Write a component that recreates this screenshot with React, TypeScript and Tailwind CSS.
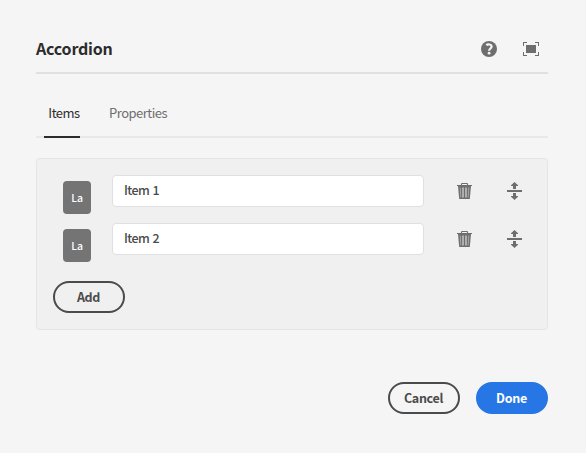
import React from 'react';

function HelpIcon() {
  return (
    <svg width="18" height="18" viewBox="0 0 18 18">
      <circle cx="9" cy="9" r="8" fill="#6e6e6e" />
      <path d="M6.3 5.1C7.6 4 11.6 4 11.6 6.6C11.6 8.5 9.1 8.5 9.1 10.8" fill="none" stroke="#f5f5f5" strokeWidth="2.2" />
      <circle cx="9.1" cy="13.2" r="1.4" fill="#f5f5f5" />
    </svg>
  );
}

function FullScreenIcon() {
  return (
    <svg width="18" height="18" viewBox="0 0 18 18" fill="#6e6e6e">
      <rect x="4" y="5" width="10" height="8" />
      <path d="M1 2h4v1H2v3H1zM13 2h4v4h-1V3h-3zM1 12h1v3h3v1H1zM16 12h1v4h-4v-1h3z" />
    </svg>
  );
}

function TrashIcon() {
  return (
    <svg width="18" height="18" viewBox="0 0 18 18">
      <path d="M5.5 3V1.5h6V3" fill="none" stroke="#6e6e6e" strokeWidth="1" strokeLinejoin="round" />
      <path d="M1 3h15v1h-1l-1.2 13H3.2L2 4H1z" fill="#6e6e6e" />
      <path d="M4.2 5.5l.6 10M12.8 5.5l-.6 10" stroke="#a6a6a6" strokeWidth="1" />
      <path d="M7 5.5v10M10 5.5v10" stroke="#f0f0f0" strokeWidth="1" />
    </svg>
  );
}

function MoveIcon() {
  return (
    <svg width="18" height="20" viewBox="0 0 18 20" fill="#6e6e6e">
      <path d="M1 9h15v2H1zM7 8V5H5v-.8L8.5 1 12 4.2V5h-2v3zM7 12v3H5v.8L8.5 19l3.5-3.2V15h-2v-3z" />
    </svg>
  );
}

function ItemRow({ label }: { label: string }) {
  return (
    <div className="flex h-12 items-start">
      <div className="mt-1.5 flex h-[33px] w-7 items-center justify-center rounded-[4px] bg-[#747474] text-[10.5px] leading-[16px] font-medium tracking-[-0.2px] text-white">
        <span>La</span>
      </div>
      <input
        className="ml-[21px] h-8 w-[312px] rounded-[4px] border border-[#e0e0e0] bg-white px-[11px] pb-[3px] text-[12.5px] tracking-[-0.6px] [word-spacing:1.2px] font-medium text-[#4b4b4b] outline-none"
        defaultValue={label}
      />
      <button className="mt-[7px] ml-8" aria-label="Delete"><TrashIcon /></button>
      <button className="mt-1.5 ml-8" aria-label="Reorder"><MoveIcon /></button>
    </div>
  );
}

const buttonBase = 'flex h-8 w-[72px] items-center justify-center rounded-full border-2 pr-px pb-px text-[12.5px] leading-[20px] font-bold tracking-[-0.3px]';

export default function App() {
  return (
    <div className="h-[453px] w-[586px] bg-[#f5f5f5] pt-8 pr-[38px] pl-9 font-['Noto_Sans_CJK_SC','Open_Sans',sans-serif]">
      <header className="flex h-[42px] items-start border-b-2 border-[#e0e0e0]">
        <h1 className="mt-[3px] flex-1 text-[16px] leading-[26px] font-bold tracking-[-0.2px] text-[#2c2c2c]">Accordion</h1>
        <button className="mt-2 mr-6" aria-label="Help"><HelpIcon /></button>
        <button className="mt-2 mr-2" aria-label="Full screen"><FullScreenIcon /></button>
      </header>
      <nav className="mt-[22px] flex h-[42px] gap-6 border-b-2 border-[#e8e8e8] pl-2 text-[13px] leading-[20px] font-normal tracking-[-0.5px]">
        <button className="-mb-0.5 flex h-[42px] w-9 justify-center border-b-2 border-[#2c2c2c] pt-[7px] pl-1 text-[#2c2c2c]">Items</button>
        <button className="flex pt-[7px] pl-[5px] text-[#6e6e6e]">Properties</button>
      </nav>
      <section className="mt-5 h-[172px] rounded-[4px] border border-[#e4e4e4] bg-[#f0f0f0] pt-4 pl-[26px]">
        <ItemRow label="Item 1" />
        <ItemRow label="Item 2" />
        <button className={`${buttonBase} mt-2.5 -ml-2.5 border-[#4b4b4b] text-[#4b4b4b]`}>Add</button>
      </section>
      <footer className="mt-[52px] flex justify-end gap-4">
        <button className={`${buttonBase} border-[#4b4b4b] text-[#4b4b4b]`}>Cancel</button>
        <button className={`${buttonBase} border-[#2677e5] bg-[#2677e5] text-white`}>Done</button>
      </footer>
    </div>
  );
}
